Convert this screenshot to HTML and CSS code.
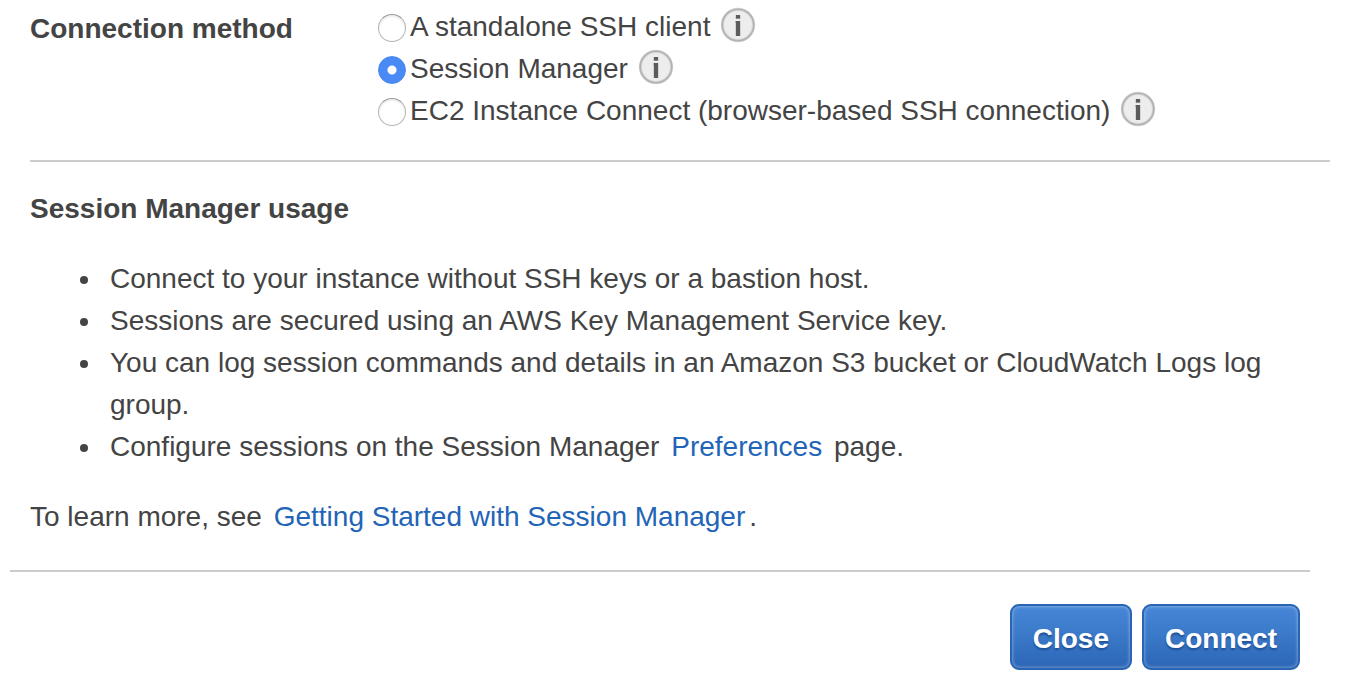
FILE: index.html
```html
<!DOCTYPE html>
<html lang="en">
<head>
<meta charset="utf-8">
<meta name="viewport" content="width=device-width, initial-scale=1">
<title>Connect to your instance</title>
<link rel="stylesheet" href="styles.css">
</head>
<body>
<svg class="sprite" aria-hidden="true">
  <symbol id="info" viewBox="0 0 36 36">
    <circle cx="18" cy="18" r="15.6" fill="#ededed" stroke="#d6d6d6" stroke-width="3.2"/>
    <circle cx="18" cy="18" r="15.8" fill="none" stroke="#b2b2b2" stroke-width="1.6"/>
    <path d="M15 14h1v2h-1z" fill="#aaa"/>
    <path d="M15.5 8h5v4h-5zM15.5 14h5v15h-5z" fill="#bbb"/>
    <path d="M16 8h4v3.6h-4zM16 14h4v15h-4z" fill="#5c5c5c"/>
  </symbol>
</svg>
<form class="dialog">
  <div class="content">
    <div class="method" role="radiogroup" aria-labelledby="method-title">
      <strong class="method-title" id="method-title">Connection method</strong>
      <div class="options">
        <div class="option">
          <input class="radio" type="radio" name="method" id="ssh">
          <label for="ssh">A standalone SSH client</label>
          <svg class="info" role="img" aria-label="Information"><use href="#info"/></svg>
        </div>
        <div class="option">
          <input class="radio" type="radio" name="method" id="session" checked>
          <label for="session">Session Manager</label>
          <svg class="info" role="img" aria-label="Information"><use href="#info"/></svg>
        </div>
        <div class="option">
          <input class="radio" type="radio" name="method" id="ec2">
          <label for="ec2">EC2 Instance Connect (browser-based SSH connection)</label>
          <svg class="info" role="img" aria-label="Information"><use href="#info"/></svg>
        </div>
      </div>
    </div>
    <h2 class="heading">Session Manager usage</h2>
    <ul class="usage">
      <li class="item"><span>Connect to your instance without SSH keys or a bastion host.</span></li>
      <li class="item"><span>Sessions are secured using an AWS Key Management Service key.</span></li>
      <li class="item"><span>You can log session commands and details in an Amazon S3 bucket or CloudWatch Logs log group.</span></li>
      <li class="item"><span>Configure sessions on the Session Manager <a class="link" href="#preferences">Preferences</a> page.</span></li>
    </ul>
    <p class="more">To learn more, see <a class="link" href="#guide">Getting Started with Session Manager</a>.</p>
  </div>
  <div class="footer">
    <button class="button" type="button">Close</button>
    <button class="button" type="button">Connect</button>
  </div>
</form>
</body>
</html>
```
FILE: styles.css
```css
* {
  box-sizing: border-box;
}

body {
  margin: 0;
  background: #fff;
  color: #444;
  font: 28px/42px "Liberation Sans", Arial, sans-serif;
}

.sprite {
  display: none;
}

.content {
  padding: 6px 20px 32px 30px;
}

.method {
  display: flex;
  padding-bottom: 28px;
  border-bottom: 2px solid #ccc;
}

.method-title {
  flex: 0 0 348px;
  padding-top: 2px;
}

.option {
  display: flex;
  align-items: center;
}

.radio {
  appearance: none;
  flex: none;
  width: 28px;
  height: 28px;
  margin: 2px 4px 0 0;
  border: 1px solid #b4b4b4;
  border-top-color: #999;
  border-radius: 50%;
  background: #fff;
  box-shadow: inset 0 2px 2px #eee;
}

.radio:checked {
  border-color: #4787f0;
  background: radial-gradient(circle, #fff 4px, #4a8af4 5px);
  box-shadow: none;
}

.info {
  flex: none;
  width: 36px;
  height: 36px;
  margin: 0 0 4px 10px;
}

.heading {
  margin: 26px 0 28px;
  font-size: 28px;
}

.usage {
  margin: 0 0 28px;
  padding-left: 50px;
  list-style: none;
}

.item {
  display: flex;
  gap: 22px;
}

.item::before {
  content: "";
  flex: none;
  width: 8px;
  height: 8px;
  margin-top: 18px;
  border-radius: 50%;
  background: #444;
}

.more {
  margin: 0;
}

.link {
  margin: 0 4px;
  color: #2264b7;
  text-decoration: none;
}

.footer {
  display: flex;
  justify-content: flex-end;
  gap: 10px;
  margin: 0 40px 0 10px;
  padding: 32px 10px 22px;
  border-top: 2px solid #ccc;
}

.button {
  height: 66px;
  padding: 3px 21px 0;
  border: 2px solid #2a65b5;
  border-radius: 9px;
  background: linear-gradient(#4787d7, #2c67b7);
  box-shadow: inset 0 0 3px 1px rgba(255, 255, 255, 0.3);
  color: #fff;
  font: bold 28px/42px "Liberation Sans", Arial, sans-serif;
  text-shadow: 0 2px 2px #1e4f94;
}
```
